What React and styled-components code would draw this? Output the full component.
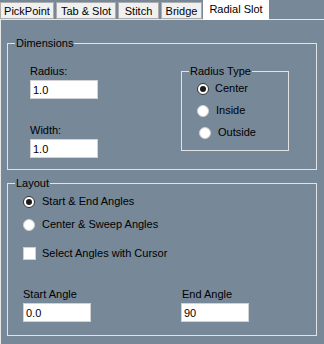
import React from "react";
import styled, { createGlobalStyle } from "styled-components";

const GlobalStyle = createGlobalStyle`
  html, body {
    margin: 0;
    padding: 0;
    background: #778899;
  }
  body {
    font-family: "Liberation Sans", Arial, sans-serif;
    font-size: 11px;
    color: #000;
  }
`;

const Window = styled.div`
  width: 324px;
  height: 344px;
  background: #778899;
  overflow: hidden;
  display: flex;
  flex-direction: column;
`;

const TabStrip = styled.div`
  display: flex;
  align-items: flex-end;
  gap: 2px;
  height: 19px;
`;

const Tab = styled.div`
  position: relative;
  z-index: ${p => (p.$active ? 1 : 0)};
  box-sizing: border-box;
  width: ${p => p.$w}px;
  height: ${p => (p.$active ? 20 : 17)}px;
  margin-left: ${p => (p.$active ? -1 : 0)}px;
  margin-bottom: ${p => (p.$active ? -1 : 0)}px;
  background: ${p => (p.$active ? "#ffffff" : "#f0f0f0")};
  border: 1px solid ${p => (p.$active ? "#ffffff" : "#acacac")};
  border-bottom: ${p => (p.$active ? "none" : "1px solid #acacac")};
  display: flex;
  align-items: center;
  justify-content: center;
  padding-top: ${p => (p.$active ? 0 : 1)}px;
  padding-bottom: ${p => (p.$active ? 4 : 0)}px;
  font-size: 11px;
  white-space: nowrap;
`;

const Panel = styled.div`
  flex: 1;
  border-top: 1px solid #e6e6e6;
  border-left: 1px solid #e6e6e6;
  padding: 17px 0 0 6px;
  display: flex;
  flex-direction: column;
  gap: 7px;
`;

const Group = styled.fieldset`
  margin: ${p => p.$top || 0}px 0 0 0;
  padding: 0;
  width: ${p => p.$w}px;
  box-sizing: border-box;
  border: 1px solid #e3e3e3;
  min-width: 0;
  flex-shrink: 0;
`;

const Legend = styled.legend`
  margin-left: 7px;
  padding: 0 1px;
  line-height: 13px;
  font-size: 11px;
`;

const GroupBody = styled.div`
  padding: ${p => p.$pad};
`;

const DimRow = styled.div`
  display: flex;
  align-items: flex-start;
`;

const FieldColumn = styled.div`
  width: 151px;
  padding-top: 15px;
  display: flex;
  flex-direction: column;
  gap: 25px;
`;

const Field = styled.div`
  display: flex;
  flex-direction: column;
  gap: 2px;
`;

const Label = styled.div`
  line-height: 13px;
  white-space: nowrap;
  padding-left: ${p => p.$indent || 0}px;
`;

const TextBox = styled.input`
  box-sizing: border-box;
  width: 68px;
  height: 19px;
  margin: 0;
  padding: 0 0 0 2px;
  border: 1px solid #d2d2d2;
  background: #fff;
  font-family: "Liberation Sans", Arial, sans-serif;
  font-size: 11px;
  color: #000;
  outline: none;
`;

const OptionList = styled.div`
  display: flex;
  flex-direction: column;
  gap: ${p => p.$gap}px;
`;

const Option = styled.div`
  display: flex;
  align-items: center;
  gap: ${p => p.$gap || 6}px;
  height: 13px;
  margin-left: ${p => p.$indent || 0}px;
  margin-top: ${p => p.$top || 0}px;
  line-height: 13px;
  white-space: nowrap;
`;

const Radio = styled.span`
  box-sizing: border-box;
  width: 12px;
  height: 12px;
  border-radius: 50%;
  background: #fff;
  border: 1px solid ${p => (p.$checked ? "#333" : "#d0d0d0")};
  display: flex;
  align-items: center;
  justify-content: center;
  flex-shrink: 0;

  &::after {
    content: "";
    width: 6px;
    height: 6px;
    border-radius: 50%;
    background: #1a1a1a;
    display: ${p => (p.$checked ? "block" : "none")};
  }
`;

const CheckBox = styled.span`
  box-sizing: border-box;
  width: 13px;
  height: 13px;
  background: #fff;
  border: 1px solid #d0d0d0;
  flex-shrink: 0;
`;

const LayoutBody = styled.div`
  display: flex;
  flex-direction: column;
`;

const AngleRow = styled.div`
  display: grid;
  grid-template-columns: 158px 68px;
  margin-top: 28px;
`;

const tabs = [
  { name: "PickPoint", w: 54 },
  { name: "Tab & Slot", w: 60 },
  { name: "Stitch", w: 41 },
  { name: "Bridge", w: 41 },
  { name: "Radial Slot", w: 66, active: true }
];

export default function App() {
  return (
    <Window>
      <GlobalStyle />
      <TabStrip>
        {tabs.map(t => (
          <Tab key={t.name} $w={t.w} $active={t.active}>
            {t.name}
          </Tab>
        ))}
      </TabStrip>
      <Panel>
        <Group $w={310}>
          <Legend>Dimensions</Legend>
          <GroupBody $pad="0 0 11px 22px">
            <DimRow>
              <FieldColumn>
                <Field>
                  <Label>Radius:</Label>
                  <TextBox readOnly value="1.0" />
                </Field>
                <Field>
                  <Label>Width:</Label>
                  <TextBox readOnly value="1.0" />
                </Field>
              </FieldColumn>
              <Group $w={108} $top={15}>
                <Legend>Radius Type</Legend>
                <GroupBody $pad="4px 0 11px 15px">
                  <OptionList $gap={9}>
                    <Option>
                      <Radio $checked />
                      Center
                    </Option>
                    <Option $gap={7}>
                      <Radio />
                      Inside
                    </Option>
                    <Option $indent={2} $gap={7}>
                      <Radio />
                      Outside
                    </Option>
                  </OptionList>
                </GroupBody>
              </Group>
            </DimRow>
          </GroupBody>
        </Group>

        <Group $w={310}>
          <Legend>Layout</Legend>
          <GroupBody $pad="5px 0 13px 15px">
            <LayoutBody>
              <OptionList $gap={10}>
                <Option $gap={7}>
                  <Radio $checked />
                  Start &amp; End Angles
                </Option>
                <Option $gap={7}>
                  <Radio />
                  Center &amp; Sweep Angles
                </Option>
              </OptionList>
              <Option $gap={6} $top={16}>
                <CheckBox />
                Select Angles with Cursor
              </Option>
              <AngleRow>
                <Field>
                  <Label>Start Angle</Label>
                  <TextBox readOnly value="0.0" />
                </Field>
                <Field>
                  <Label $indent={1}>End Angle</Label>
                  <TextBox readOnly value="90" />
                </Field>
              </AngleRow>
            </LayoutBody>
          </GroupBody>
        </Group>
      </Panel>
    </Window>
  );
}
